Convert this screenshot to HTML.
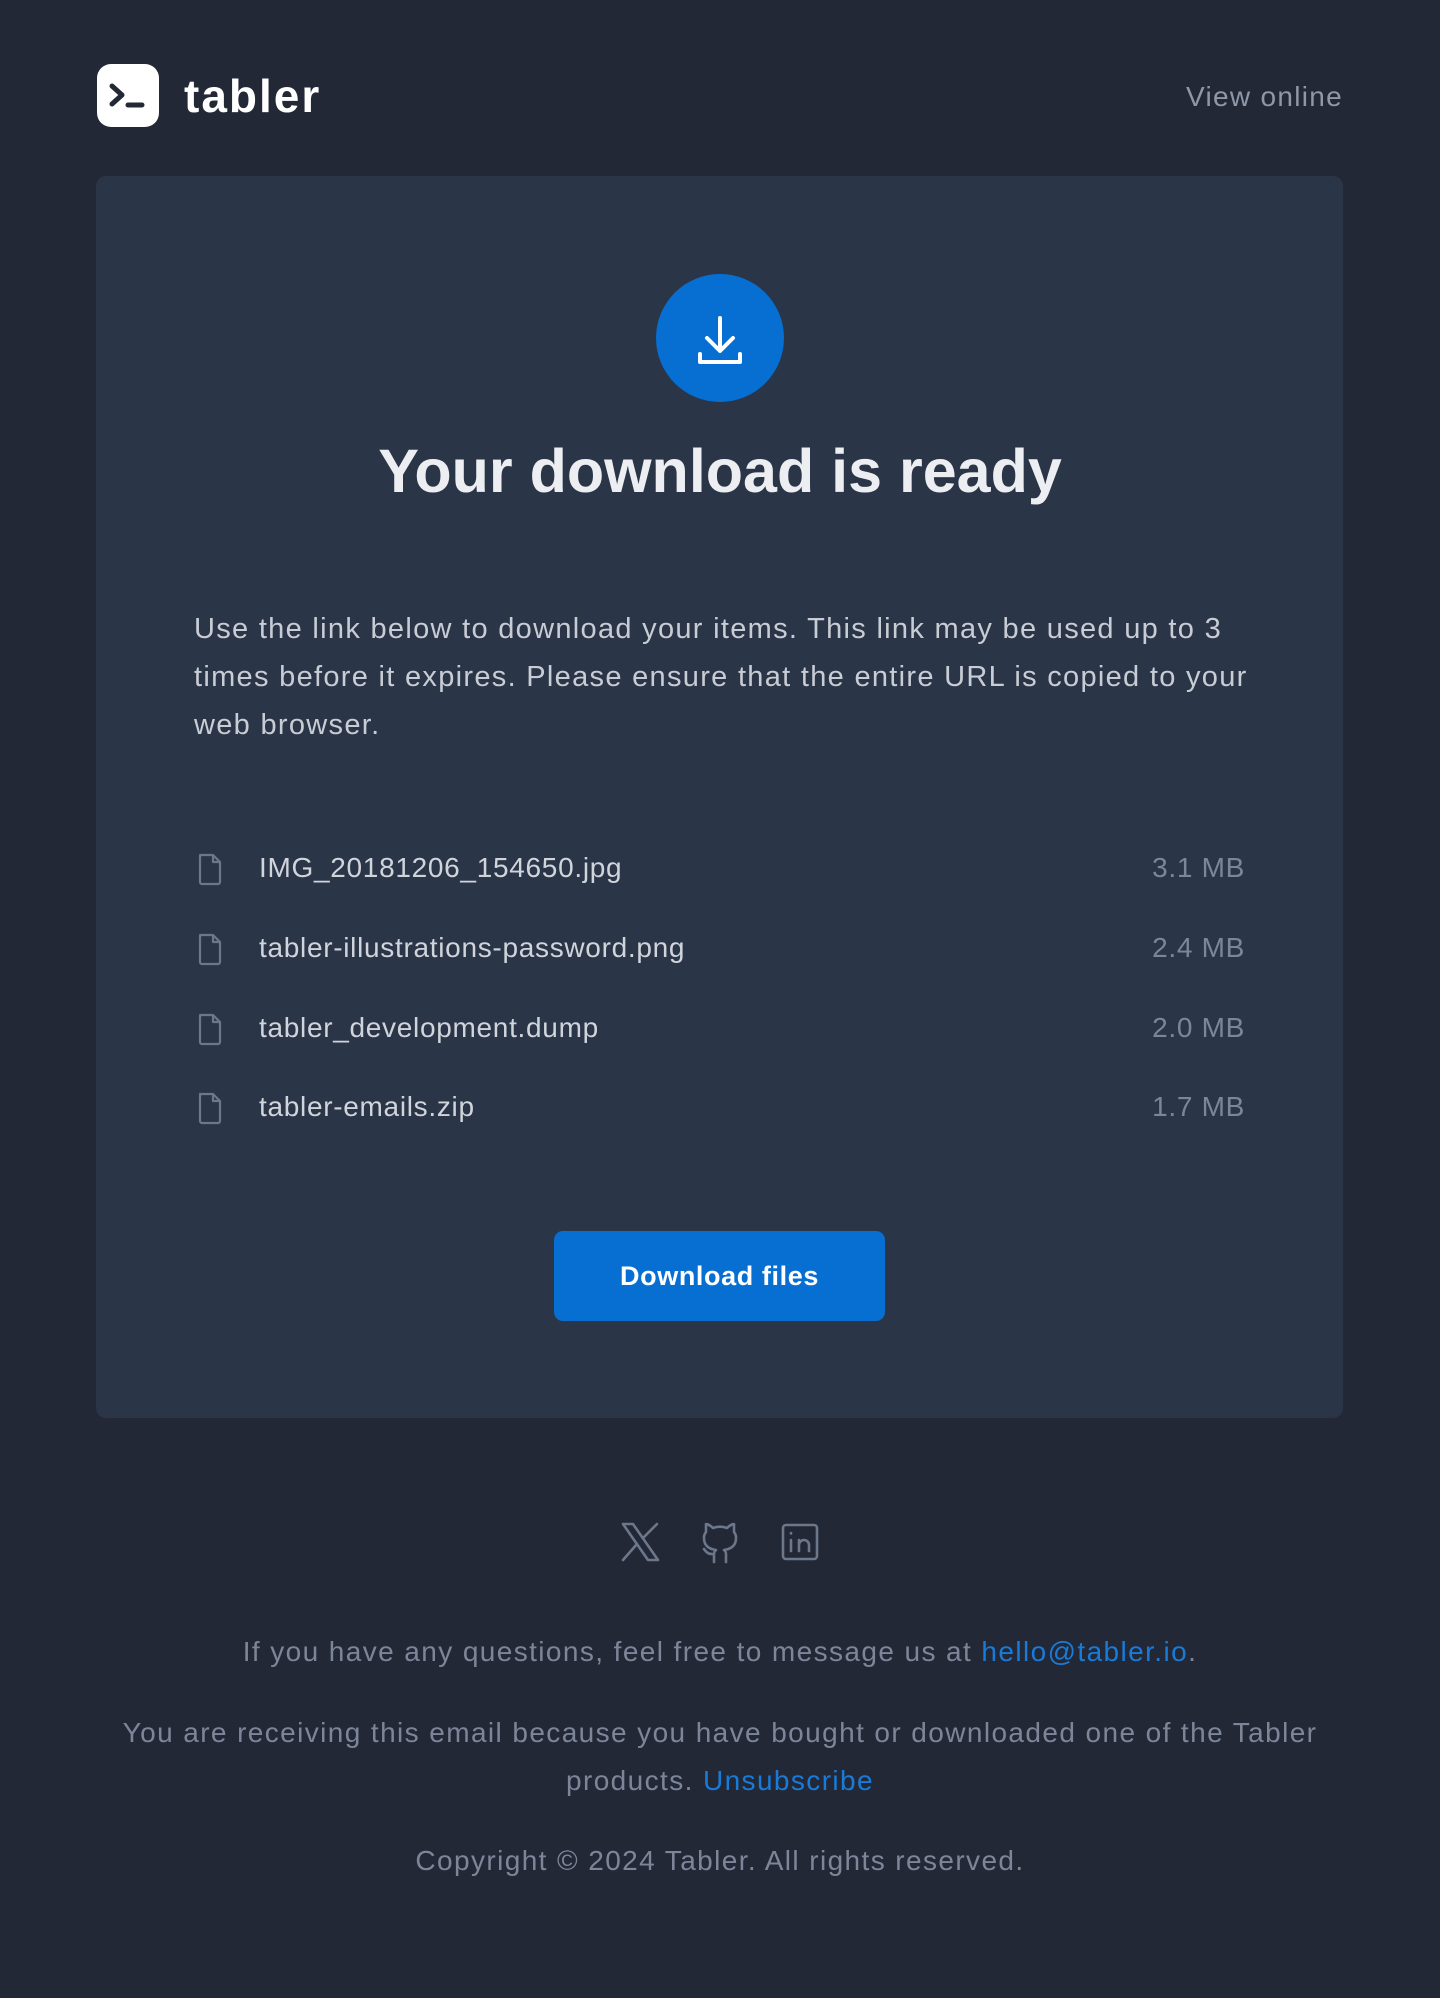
<!DOCTYPE html>
<html><head><meta charset="utf-8"><style>
*{margin:0;padding:0;box-sizing:border-box}
html,body{width:1440px;height:1998px;background:#222836;font-family:"Liberation Sans",sans-serif;overflow:hidden}
.abs{position:absolute}
.card{left:96px;top:176px;width:1247px;height:1242px;background:#2b3548;border-radius:10px}
.row{position:absolute;left:196px;width:1049px;height:40px;font-size:28px;color:#d0d4db;letter-spacing:0.7px}
.row .n{position:absolute;left:63px;top:0;line-height:40px}
.row .s{position:absolute;right:0;top:0;line-height:40px;color:#7d8699}
.row svg{position:absolute;left:0;top:4px}
.foot{left:0;width:1440px;text-align:center;font-size:28px;color:#7d8699;letter-spacing:1.4px}
a{color:#1a7ad8;text-decoration:none}
</style></head><body>
<div class="abs" style="left:97px;top:64px;width:62px;height:63px;background:#fff;border-radius:14px">
<svg width="62" height="63" viewBox="0 0 62 63"><path d="M15 22l10 9-10 9" stroke="#222836" stroke-width="5" fill="none" stroke-linecap="round" stroke-linejoin="round"/><path d="M31 41h14" stroke="#222836" stroke-width="5" stroke-linecap="round"/></svg>
</div>
<div class="abs" style="left:184px;top:66px;font-size:46px;font-weight:bold;color:#fff;line-height:60px;letter-spacing:2px">tabler</div>
<div class="abs" style="right:97px;top:80px;font-size:28px;color:#8f98a8;line-height:34px;letter-spacing:1.3px">View online</div>
<div class="abs card"></div>
<div class="abs" style="left:656px;top:274px;width:128px;height:128px;border-radius:50%;background:#066fd1">
<svg width="128" height="128" viewBox="0 0 128 128"><path d="M64 44v32M51 64l13 13 13-13M44 80v8h40v-8" stroke="#fff" stroke-width="4" fill="none" stroke-linecap="round" stroke-linejoin="round"/></svg>
</div>
<div class="abs" style="left:0;width:1440px;top:436px;text-align:center;font-size:61px;font-weight:bold;color:#eceef1;line-height:70px">Your download is ready</div>
<div class="abs" style="left:194px;top:605px;font-size:29px;letter-spacing:1.3px;line-height:48px;color:#c8ccd4;white-space:nowrap">Use the link below to download your items. This link may be used up to 3<br>times before it expires. Please ensure that the entire URL is copied to your<br>web browser.</div>
<div class="row" style="top:848px"><svg width="28" height="34" viewBox="0 0 28 34"><path d="M4 3h13l7 7v20a2 2 0 0 1-2 2H6a2 2 0 0 1-2-2V5a2 2 0 0 1 2-2zM17 3v7h7" stroke="#6d778a" stroke-width="2.2" fill="none" stroke-linejoin="round"/></svg><span class="n">IMG_20181206_154650.jpg</span><span class="s">3.1 MB</span></div>
<div class="row" style="top:928px"><svg width="28" height="34" viewBox="0 0 28 34"><path d="M4 3h13l7 7v20a2 2 0 0 1-2 2H6a2 2 0 0 1-2-2V5a2 2 0 0 1 2-2zM17 3v7h7" stroke="#6d778a" stroke-width="2.2" fill="none" stroke-linejoin="round"/></svg><span class="n">tabler-illustrations-password.png</span><span class="s">2.4 MB</span></div>
<div class="row" style="top:1008px"><svg width="28" height="34" viewBox="0 0 28 34"><path d="M4 3h13l7 7v20a2 2 0 0 1-2 2H6a2 2 0 0 1-2-2V5a2 2 0 0 1 2-2zM17 3v7h7" stroke="#6d778a" stroke-width="2.2" fill="none" stroke-linejoin="round"/></svg><span class="n">tabler_development.dump</span><span class="s">2.0 MB</span></div>
<div class="row" style="top:1087px"><svg width="28" height="34" viewBox="0 0 28 34"><path d="M4 3h13l7 7v20a2 2 0 0 1-2 2H6a2 2 0 0 1-2-2V5a2 2 0 0 1 2-2zM17 3v7h7" stroke="#6d778a" stroke-width="2.2" fill="none" stroke-linejoin="round"/></svg><span class="n">tabler-emails.zip</span><span class="s">1.7 MB</span></div>
<div class="abs" style="left:554px;top:1231px;width:331px;height:90px;background:#066fd1;border-radius:9px;color:#fff;font-size:27px;font-weight:bold;letter-spacing:0.6px;text-align:center;line-height:90px">Download files</div>
<svg class="abs" style="left:600px;top:1500px" width="240" height="80" viewBox="0 0 240 80">
<g stroke="#6d778a" stroke-width="2.6" fill="none" stroke-linecap="round" stroke-linejoin="round">
<path d="M623 1524h10l25 36h-10z" transform="translate(-600,-1500)"/>
<path d="M623 1560l14-16M643 1538l14-14" transform="translate(-600,-1500)"/>
<path d="M126 62v-8a5 5 0 0 0-2-4c7-1 12-4 12-12a9 9 0 0 0-2-6V24s-3 0-7 4a20 20 0 0 0-14 0c-4-4-7-4-7-4v8a9 9 0 0 0-2 6c0 8 5 11 12 12a5 5 0 0 0-2 4v8M112 54c-4 0-6-2-8-5"/>
<rect x="183" y="25" width="34" height="34" rx="3"/><path d="M191 40v11M191 33v.5M199 51v-11M199 45a5 5 0 0 1 10 0v6"/>
</g></svg>
<div class="abs foot" style="top:1632px;line-height:40px">If you have any questions, feel free to message us at <a>hello@tabler.io</a>.</div>
<div class="abs foot" style="top:1709px;line-height:48px">You are receiving this email because you have bought or downloaded one of the Tabler<br>products. <a>Unsubscribe</a></div>
<div class="abs foot" style="top:1841px;line-height:40px">Copyright © 2024 Tabler. All rights reserved.</div>
</body></html>
